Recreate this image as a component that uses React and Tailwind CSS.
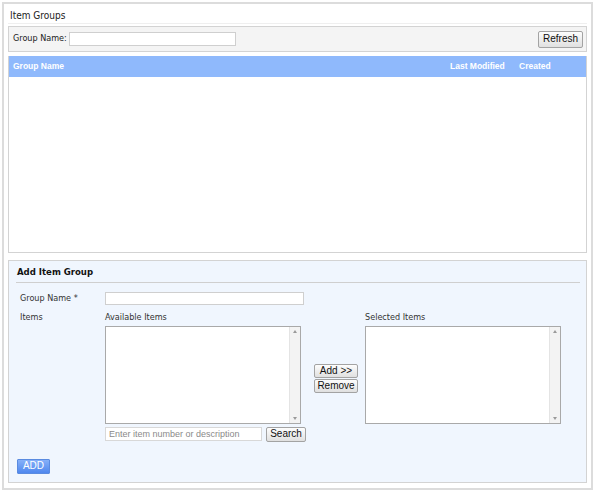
import React from "react";

const tahoma = "font-['DejaVu_Sans_Condensed','DejaVu_Sans',Tahoma,sans-serif]";
const arial = "font-['Liberation_Sans',Arial,sans-serif]";

function Scrollbar() {
  return (
    <div className="flex w-[11px] flex-col items-center justify-between border-l border-[#e4e4e4] bg-[#f3f3f3] py-[3px]">
      <div className="h-0 w-0 border-x-[2px] border-b-[3px] border-x-transparent border-b-[#9a9a9a]" />
      <div className="h-0 w-0 border-x-[2px] border-t-[3px] border-x-transparent border-t-[#9a9a9a]" />
    </div>
  );
}

function ListBox() {
  return (
    <div className="flex h-[98px] w-[196px] border border-[#a9a9a9] bg-white">
      <div className="flex-1" />
      <Scrollbar />
    </div>
  );
}

function Btn({ children, className = "" }) {
  return (
    <button
      className={`${arial} rounded-[2px] border border-[#a3a3a3] bg-gradient-to-b from-[#fdfdfd] to-[#e0e0e0] text-[10px] leading-none text-[#111] ${className}`}
    >
      {children}
    </button>
  );
}

export default function App() {
  return (
    <div className="h-[495px] w-[596px] bg-white pl-[2px] pt-[2px]">
      <div className="flex h-[488px] w-[591px] flex-col border-2 border-[#dcdcdc] px-[4px]">
        {/* Title */}
        <div className={`${tahoma} flex h-[20px] items-center border-b border-[#efefef] pl-[2px] pt-[4px] text-[10px] text-[#222]`}>
          Item Groups
        </div>

        {/* Filter bar */}
        <div className="mt-[2px] flex h-[26px] items-center justify-between border border-[#d3d3d3] bg-[#f4f4f4] pl-[4px] pr-[3px]">
          <div className="flex items-center">
            <span className={`${tahoma} w-[56px] text-[9px] text-[#222]`}>Group Name:</span>
            <input className="h-[14px] w-[167px] border border-[#cfcfcf] bg-white" />
          </div>
          <Btn className="h-[17px] w-[45px]">Refresh</Btn>
        </div>

        {/* Table */}
        <div className="mt-[4px] flex h-[197px] flex-col border border-[#d3d3d3] border-t-0 bg-white">
          <div className={`${arial} flex h-[21px] items-center bg-[#8fb9fc] text-[8.5px] font-bold text-white`}>
            <span className="pl-[4px]">Group Name</span>
            <span className="ml-auto w-[69px]">Last Modified</span>
            <span className="w-[38px]">Created</span>
            <span className="w-[29px]" />
          </div>
          <div className="flex-1" />
        </div>

        {/* Add panel */}
        <div className="mt-[7px] flex h-[223px] flex-col border border-[#d3d3d3] bg-[#f0f6fe] pl-[7px] pr-[6px]">
          <div className={`${tahoma} flex h-[22px] items-center border-b border-[#cfcfcf] pl-[1px] pt-[2px] text-[9.5px] font-bold text-[#111]`}>
            Add Item Group
          </div>

          <div className="mt-[9px] flex items-center pl-[4px]">
            <span className={`${tahoma} w-[85px] text-[9px] text-[#333]`}>Group Name *</span>
            <input className="h-[13px] w-[199px] border border-[#cfcfcf] bg-white" />
          </div>

          <div className="mt-[6px] flex pl-[4px]">
            <div className={`${tahoma} w-[85px] text-[9px] leading-[11px] text-[#333]`}>Items</div>
            <div className="flex w-[196px] flex-col">
              <div className={`${tahoma} h-[14px] text-[9px] leading-[11px] text-[#333]`}>Available Items</div>
              <ListBox />
              <div className="mt-[3px] flex w-[201px] items-center">
                <input
                  placeholder="Enter item number or description"
                  className={`${arial} h-[14px] w-[157px] shrink-0 border border-[#d8d8d8] bg-white px-[3px] text-[9px] placeholder:text-[#8a8a8a]`}
                />
                <Btn className="ml-[4px] h-[15px] w-[40px] shrink-0">Search</Btn>
              </div>
            </div>
            <div className="ml-[13px] mr-[7px] flex w-[44px] flex-col gap-[1px] pt-[52px]">
              <Btn className="h-[14px] w-[44px]">Add &gt;&gt;</Btn>
              <Btn className="h-[14px] w-[44px]">Remove</Btn>
            </div>
            <div className="flex flex-col">
              <div className={`${tahoma} h-[14px] text-[9px] leading-[11px] text-[#333]`}>Selected Items</div>
              <ListBox />
            </div>
          </div>

          <div className="mt-auto mb-[7px] pl-[1px]">
            <button className={`${arial} h-[15px] w-[33px] rounded-[1px] border border-[#5a8be0] bg-gradient-to-b from-[#86b0f8] to-[#4f87ee] text-[10px] leading-none text-white`}>
              ADD
            </button>
          </div>
        </div>
      </div>
    </div>
  );
}
